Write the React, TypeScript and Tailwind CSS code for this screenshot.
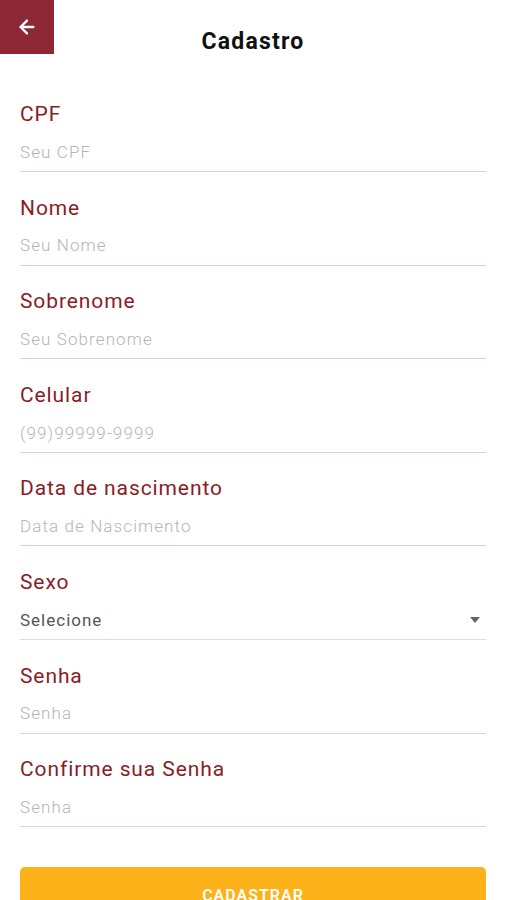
import {ArrowLeft} from 'lucide-react';

type Field = {
  label: string;
  placeholder: string;
  select?: boolean;
};

const fields: Field[] = [
  {label: 'CPF', placeholder: 'Seu CPF'},
  {label: 'Nome', placeholder: 'Seu Nome'},
  {label: 'Sobrenome', placeholder: 'Seu Sobrenome'},
  {label: 'Celular', placeholder: '(99)99999-9999'},
  {label: 'Data de nascimento', placeholder: 'Data de Nascimento'},
  {label: 'Sexo', placeholder: 'Selecione', select: true},
  {label: 'Senha', placeholder: 'Senha'},
  {label: 'Confirme sua Senha', placeholder: 'Senha'},
];

export default function App() {
  return (
    <div className="h-[900px] w-[506px] overflow-hidden bg-white font-['Roboto',sans-serif]">
      <header className="relative flex h-[100px] items-start justify-center">
        <button className="absolute left-0 top-0 flex h-[54px] w-[54px] items-center justify-center bg-[#8c2835] text-white">
          <ArrowLeft size={22} strokeWidth={2.5} />
        </button>
        <h1 className="mt-[28px] text-[23px] font-bold leading-[28px] tracking-[1.2px] text-[#111]">
          Cadastro
        </h1>
      </header>

      <div className="flex flex-col gap-[21.6px] px-5">
        {fields.map(f => (
          <div key={f.label} className="flex flex-col">
            <label className="h-[28px] text-[21px] leading-[28px] tracking-[0.9px] text-[#8a1c28]">
              {f.label}
            </label>
            {f.select ? (
              <div className="mt-[7px] flex h-[37px] items-center justify-between border-b border-[#dcdcdc] pb-[1px]">
                <span className="text-[17px] tracking-[1px] text-[#555]">{f.placeholder}</span>
                <svg width="10" height="6" viewBox="0 0 10 6" className="mr-[6px]">
                  <path d="M0 0h10L5 6z" fill="#666" />
                </svg>
              </div>
            ) : (
              <div className="mt-[7px] flex h-[37px] items-center border-b border-[#e2cdd0] pb-[1px]">
                <span className="text-[17px] font-light tracking-[1.1px] text-[#b5b5b5]">
                  {f.placeholder}
                </span>
              </div>
            )}
          </div>
        ))}

        <button className="mt-[18.4px] flex h-[52px] items-start justify-center rounded-[5px] bg-[#fdb21a] pt-[17px] text-[16px] font-semibold tracking-[1px] text-white">
          CADASTRAR
        </button>
      </div>
    </div>
  );
}
